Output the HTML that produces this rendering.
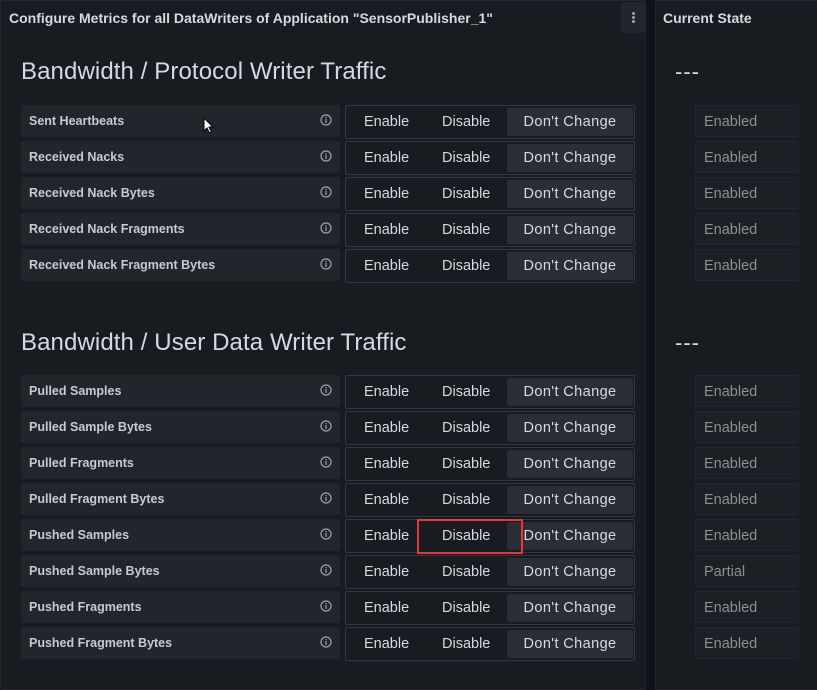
<!DOCTYPE html><html><head><style>
*{margin:0;padding:0;box-sizing:border-box}
body{width:817px;height:679px;background:#111217;font-family:"Liberation Sans",sans-serif;position:relative;overflow:hidden;color:#ccccdc}
.p{position:absolute;background:#181b1f;border:1px solid #24272d;border-radius:2px}
.hd{position:absolute;font-size:14px;font-weight:bold;color:#d8d9e0;top:10px}
.t{position:absolute;left:21px;font-size:24px;color:#d8d9e0;letter-spacing:.1px}
.l{position:absolute;left:21px;width:319px;height:32px;background:#22252b;border-radius:2px;font-size:12.5px;font-weight:bold;color:#c8c9d2;padding:9px 0 0 8px}
.l svg{position:absolute;right:8px;top:9px}
.g{position:absolute;left:345px;width:290px;height:34px;border:1px solid #34373e;border-radius:2px;font-size:14.5px;color:#d8d9e0}
.g span{position:absolute;top:8px}
.g .dc{position:absolute;left:161px;top:2px;width:126px;height:28px;background:#2b2e34;border-radius:2px;padding-top:6px;text-align:center;letter-spacing:.4px}
.s{position:absolute;left:695px;width:104px;height:32px;background:#1c1f24;border:1px solid #24272d;border-radius:2px;font-size:14.5px;color:#8e8e95;padding:8px 0 0 8px}
.d{position:absolute;left:675px;font-size:22px;color:#d8d9e0;letter-spacing:1px}
</style></head><body>
<div class="p" style="left:0;top:0;width:646px;height:690px"></div>
<div class="p" style="left:655px;top:0;width:170px;height:690px"></div>
<div class="hd" style="left:9px">Configure Metrics for all DataWriters of Application "SensorPublisher_1"</div>
<div style="position:absolute;left:621px;top:2px;width:24px;height:31px;background:#22252b;border-radius:2px"><div style="position:absolute;left:11px;top:10px;width:3px;height:3px;background:#9fa1a8;border-radius:50%;box-shadow:0 4px 0 #9fa1a8,0 8px 0 #9fa1a8"></div></div>
<div class="hd" style="left:663px">Current State</div>
<div class="t" style="top:58px">Bandwidth / Protocol Writer Traffic</div>
<div class="t" style="top:329px">Bandwidth / User Data Writer Traffic</div>
<div class="d" style="top:59px">---</div>
<div class="d" style="top:330px">---</div>
<div id="rows"></div>
<script>
var a=[["Sent Heartbeats",105],["Received Nacks",141],["Received Nack Bytes",177],["Received Nack Fragments",213],["Received Nack Fragment Bytes",249],["Pulled Samples",375],["Pulled Sample Bytes",411],["Pulled Fragments",447],["Pulled Fragment Bytes",483],["Pushed Samples",519],["Pushed Sample Bytes",555],["Pushed Fragments",591],["Pushed Fragment Bytes",627]];
var h="";a.forEach(function(r){var y=r[1];
h+='<div class="l" style="top:'+y+'px">'+r[0]+'<svg width="12" height="12" viewBox="0 0 12 12"><circle cx="6" cy="6" r="5" fill="none" stroke="#9fa1a8" stroke-width="1.2"/><rect x="5.4" y="5" width="1.2" height="4" fill="#9fa1a8"/><rect x="5.4" y="3" width="1.2" height="1.2" fill="#9fa1a8"/></svg></div>';
h+='<div class="g" style="top:'+y+'px"><span style="left:18px">Enable</span><span style="left:96px">Disable</span><div class="dc">Don\'t Change</div></div>';
h+='<div class="s" style="top:'+y+'px">'+(y==555?'Partial':'Enabled')+'</div>';});
h+='<div style="position:absolute;left:417px;top:519px;width:106px;height:35px;border:2px solid #e5383b"></div>';
h+='<svg style="position:absolute;left:203px;top:117px" width="12" height="18" viewBox="0 0 12 18"><path d="M1 1 L1 14 L4 11 L6.5 16 L8.5 15 L6 10 L10 10 Z" fill="#fff" stroke="#000" stroke-width="1"/></svg>';
document.getElementById("rows").innerHTML=h;
</script>
</body></html>
